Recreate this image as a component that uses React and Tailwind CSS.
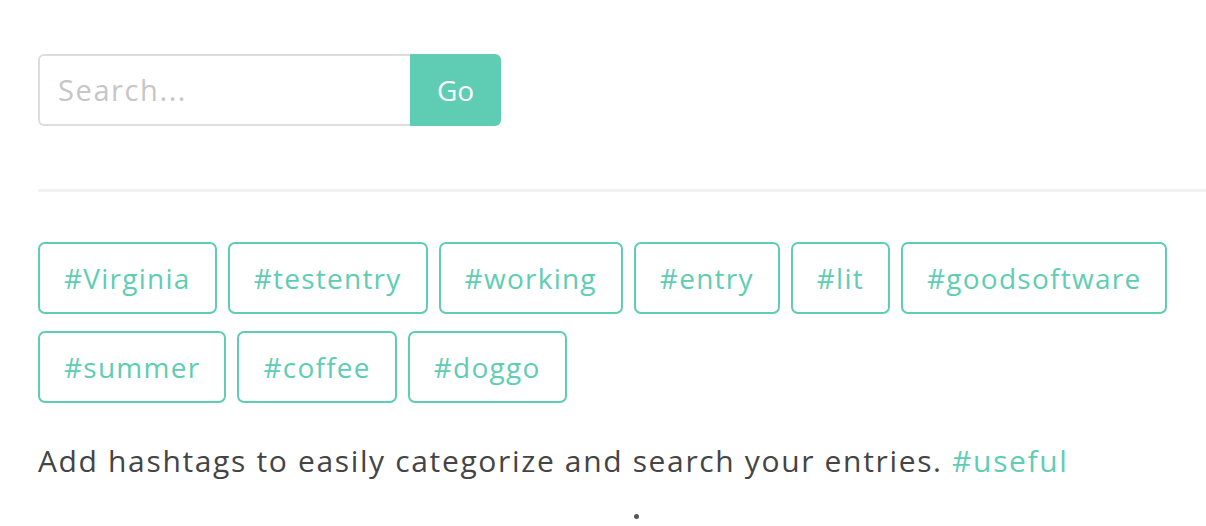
import React from "react";

const tags1 = ["#Virginia", "#testentry", "#working", "#entry", "#lit", "#goodsoftware"];
const tags2 = ["#summer", "#coffee", "#doggo"];

function Tag({ t }) {
  return (
    <div className="h-[72px] px-[24px] flex items-center border-2 border-[#5fcdb3] rounded-[7px] text-[#5fcdb3] text-[28px] tracking-[1.25px]">
      {t}
    </div>
  );
}

export default function App() {
  return (
    <div className="w-[1206px] h-[526px] bg-white overflow-hidden pl-[38px] pt-[54px] relative" style={{ fontFamily: "'Open Sans', sans-serif" }}>
      <div className="flex h-[72px]">
        <div className="w-[372px] h-full border-2 border-[#dddddd] border-r-0 rounded-l-[6px] flex items-center pl-[18px] text-[29px] tracking-[1.6px] text-[#c6c6c6]">
          Search...
        </div>
        <div className="w-[91px] h-full bg-[#5fcdb3] rounded-r-[6px] flex items-center justify-center text-white text-[28px]">
          Go
        </div>
      </div>
      <div className="mt-[63px] h-[3px] bg-[#f2f2f2]" />
      <div className="mt-[50px] flex flex-col gap-[17px]">
        <div className="flex gap-[11px]">
          {tags1.map((t) => <Tag key={t} t={t} />)}
        </div>
        <div className="flex gap-[11px]">
          {tags2.map((t) => <Tag key={t} t={t} />)}
        </div>
      </div>
      <p className="mt-[38px] text-[30px] tracking-[1.65px] text-[#444444] leading-[40px]">
        Add hashtags to easily categorize and search your entries. <span className="text-[#5fcdb3]">#useful</span>
      </p>
      <div className="absolute left-[634px] top-[514px] w-[5px] h-[5px] rounded-full bg-[#555555]" />
    </div>
  );
}
